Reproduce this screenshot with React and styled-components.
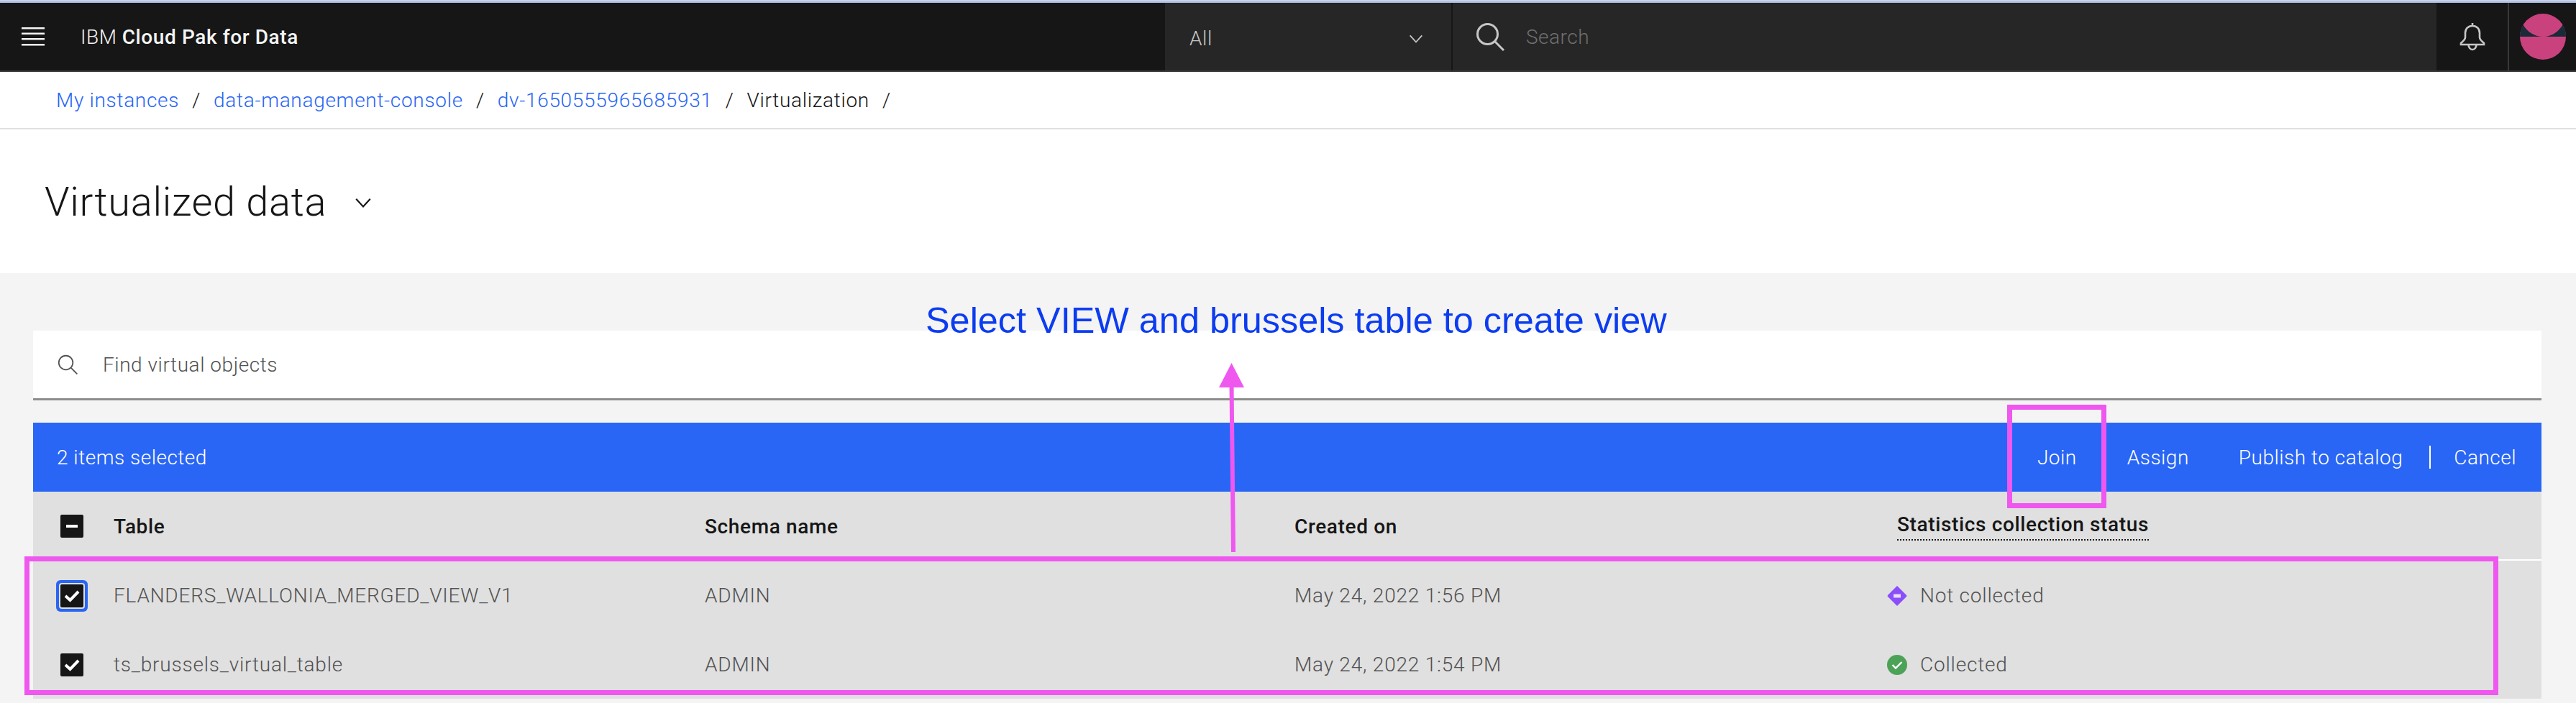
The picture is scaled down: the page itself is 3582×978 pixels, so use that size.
import React from 'react'
import styled, { createGlobalStyle } from 'styled-components'

const Global = createGlobalStyle`
  html, body { margin: 0; padding: 0; background: #f4f4f4; }
  body { font-family: Roboto, "Open Sans", sans-serif; }
  * { box-sizing: border-box; }
`

const Page = styled.div`
  position: relative;
  width: 3582px;
  height: 978px;
  overflow: hidden;
  background: #f4f4f4;
  display: flex;
  flex-direction: column;
`

const WindowEdge = styled.div`
  height: 4px;
  background: linear-gradient(#c9d3ea 50%, #a9b9dd 50%);
`

const Header = styled.header`
  height: 96px;
  flex-shrink: 0;
  display: flex;
  background: #161616;
  border-bottom: 2px solid #393939;
  color: #f4f4f4;
`

const MenuButton = styled.div`
  width: 112px;
  padding-left: 30px;
  display: flex;
  align-items: center;
`

const Brand = styled.div`
  width: 1508px;
  display: flex;
  align-items: center;
  font-size: 28px;
  letter-spacing: 0.6px;
  font-weight: 300;
  strong { font-weight: 500; margin-left: 7px; }
`

const ScopeSelect = styled.div`
  width: 400px;
  display: flex;
  align-items: center;
  justify-content: space-between;
  padding: 4px 38px 0 34px;
  background: #262626;
  border-right: 2px solid #161616;
  font-size: 28px;
  font-weight: 300;
  letter-spacing: 0.6px;
  color: #c6c6c6;
`

const SearchField = styled.div`
  width: 1368px;
  display: flex;
  align-items: center;
  gap: 30px;
  padding-left: 32px;
  background: #262626;
  font-size: 28px;
  font-weight: 300;
  letter-spacing: 0.5px;
  color: #6f6f6f;
`

const BellButton = styled.div`
  width: 99px;
  display: flex;
  align-items: center;
  justify-content: center;
`

const AvatarButton = styled.div`
  flex: 1;
  display: flex;
  align-items: center;
  justify-content: center;
  border-left: 2px solid #393939;
`

const BreadcrumbBar = styled.nav`
  height: 80px;
  flex-shrink: 0;
  display: flex;
  align-items: center;
  padding: 0 0 0 78px;
  background: #fff;
  border-bottom: 2px solid #e0e0e0;
  font-size: 28px;
  font-weight: 300;
  letter-spacing: 0.7px;
  color: #161616;
`

const Crumb = styled.span`
  color: ${p => (p.$current ? '#161616' : '#2966f5')};
`

const Slash = styled.span`
  margin: 0 18px;
  color: #161616;
`

const TitleBar = styled.div`
  height: 200px;
  flex-shrink: 0;
  display: flex;
  align-items: center;
  gap: 38px;
  padding: 2px 0 0 62px;
  background: #fff;
`

const Title = styled.h1`
  margin: 0;
  font-size: 56px;
  font-weight: 300;
  letter-spacing: 0.7px;
  color: #161616;
`

const Content = styled.main`
  flex: 1;
  padding: 80px 48px 0 46px;
`

const FindBox = styled.div`
  height: 97px;
  display: flex;
  align-items: center;
  gap: 35px;
  padding-left: 34px;
  background: #fff;
  border-bottom: 3px solid #8d8d8d;
  font-size: 28px;
  font-weight: 300;
  letter-spacing: 0.55px;
  color: #525252;
`

const BatchBar = styled.div`
  height: 96px;
  margin-top: 31px;
  display: flex;
  align-items: center;
  justify-content: space-between;
  padding: 0 35px 0 33px;
  background: #2966f5;
  color: #fff;
  font-size: 28px;
  font-weight: 300;
  letter-spacing: 0.5px;
`

const BatchActions = styled.div`
  display: flex;
  align-items: center;
`

const BatchAction = styled.span`
  margin-left: ${p => p.$gap}px;
`

const BatchDivider = styled.span`
  width: 2px;
  height: 32px;
  margin: 0 32px 0 37px;
  background: #fff;
`

const Row = styled.div`
  display: grid;
  grid-template-columns: 112px 822px 820px 823px 1fr;
  align-items: center;
  height: 96px;
  padding-top: 1px;
  background: #e0e0e0;
  font-size: 28px;
  font-weight: 300;
  letter-spacing: 0.8px;
  color: #525252;
`

const HeadRow = styled(Row)`
  border-bottom: 2px solid #fff;
  padding-top: 2px;
  font-weight: 500;
  color: #161616;
  letter-spacing: 0.64px;
`

const CheckCell = styled.div`
  padding-left: 38px;
  display: flex;
`

const CheckBox = styled.span`
  width: 32px;
  height: 32px;
  display: flex;
  align-items: center;
  justify-content: center;
  background: #161616;
  border-radius: 2px;
  box-shadow: ${p => (p.$focused ? '0 0 0 2px #e0e0e0, 0 0 0 6px #2966f5' : 'none')};
`

const StatusCell = styled.div`
  display: flex;
  align-items: center;
  gap: 17px;
`

const StatusHead = styled.span`
  margin-left: 15px;
  padding-bottom: 4px;
  border-bottom: 2px dotted #161616;
`

const Overlay = styled.div`
  position: absolute;
  inset: 0;
  pointer-events: none;
`

const Callout = styled.div`
  position: absolute;
  left: ${p => p.$x}px;
  top: ${p => p.$y}px;
  width: ${p => p.$w}px;
  height: ${p => p.$h}px;
  border: ${p => p.$t}px solid #ef57ef;
`

const Note = styled.div`
  position: absolute;
  left: 1287px;
  top: 417px;
  font-family: "Liberation Sans", Arial, sans-serif;
  font-size: 50.4px;
  line-height: 58px;
  white-space: nowrap;
  color: #0c3cf0;
`

const ArrowSvg = styled.svg`
  position: absolute;
  left: 1690px;
  top: 500px;
`

const Chevron = ({ size = 24, color = '#161616' }) => (
  <svg width={size} height={size} viewBox="0 0 24 24" fill="none" stroke={color} strokeWidth="2">
    <path d="M3 8l9 10 9-10" />
  </svg>
)

const Hamburger = () => (
  <svg width="32" height="26" viewBox="0 0 32 26" fill="#f4f4f4">
    <rect y="0" width="32" height="2.5" />
    <rect y="7.5" width="32" height="2.5" />
    <rect y="15" width="32" height="2.5" />
    <rect y="23" width="32" height="2.5" />
  </svg>
)

const SearchIcon = ({ size, color, width }) => (
  <svg width={size} height={size} viewBox="0 0 40 40" fill="none" stroke={color} strokeWidth={width}>
    <circle cx="16.5" cy="16.5" r="14" />
    <path d="M27 27l12 12" />
  </svg>
)

const Bell = () => (
  <svg width="36" height="40" viewBox="0 0 36 40" fill="none" stroke="#c6c6c6" strokeWidth="2.6">
    <path d="M18 1v4M18 5c-6.500 0-10 4.500-10 10v6c0 3-3 5.500-6 8v2h32v-2c-3-2.500-6-5-6-8v-6c0-5.500-3.500-10-10-10z" />
    <path d="M12.500 31c0 4 2.500 7 5.500 7s5.500-3 5.500-7" />
  </svg>
)

const Avatar = () => (
  <svg width="64" height="64" viewBox="0 0 64 64">
    <circle cx="32" cy="32" r="32" fill="#c9427d" />
    <path d="M4.500 15.500C10 25 20 32 32 32c12 0 22-7 27.500-16.500C62.500 20 64 26 64 32H0c0-6 1.500-12 4.500-16.500z" fill="#1b2a38" />
  </svg>
)

const Tick = () => (
  <svg width="22" height="18" viewBox="0 0 22 18" fill="none" stroke="#fff" strokeWidth="4">
    <path d="M2 9l6.500 6L20 3" />
  </svg>
)

const Dash = () => (
  <svg width="16" height="4" viewBox="0 0 16 4">
    <rect width="16" height="4" fill="#fff" />
  </svg>
)

const NotCollected = () => (
  <svg width="30" height="30" viewBox="0 0 30 30">
    <path d="M15 1l13 13a1.500 1.500 0 0 1 0 2L15 29 2 16a1.500 1.500 0 0 1 0-2z" fill="#8a4ffa" />
    <rect x="10" y="12.500" width="10" height="5" fill="#e8dcff" />
  </svg>
)

const Collected = () => (
  <svg width="30" height="30" viewBox="0 0 30 30">
    <circle cx="15" cy="15" r="14" fill="#4ca257" />
    <path d="M8.500 15l4.500 4.500 8.500-8.500" fill="none" stroke="#fff" strokeWidth="2.400" />
  </svg>
)

const rows = [
  { name: 'FLANDERS_WALLONIA_MERGED_VIEW_V1', time: 'May 24, 2022 1:56 PM', status: 'Not collected', focused: true },
  { name: 'ts_brussels_virtual_table', time: 'May 24, 2022 1:54 PM', status: 'Collected', focused: false },
]

const App = () => (
  <Page>
    <Global />
    <WindowEdge />
    <Header>
      <MenuButton><Hamburger /></MenuButton>
      <Brand>IBM <strong>Cloud Pak for Data</strong></Brand>
      <ScopeSelect>All <Chevron size={22} color="#c6c6c6" /></ScopeSelect>
      <SearchField>
        <SearchIcon size={40} color="#c6c6c6" width={3} />
        Search
      </SearchField>
      <BellButton><Bell /></BellButton>
      <AvatarButton><Avatar /></AvatarButton>
    </Header>

    <BreadcrumbBar>
      <Crumb>My instances</Crumb><Slash>/</Slash>
      <Crumb>data-management-console</Crumb><Slash>/</Slash>
      <Crumb>dv-1650555965685931</Crumb><Slash>/</Slash>
      <Crumb $current>Virtualization</Crumb><Slash>/</Slash>
    </BreadcrumbBar>

    <TitleBar>
      <Title>Virtualized data</Title>
      <Chevron size={26} />
    </TitleBar>

    <Content>
      <FindBox>
        <SearchIcon size={28} color="#525252" width={2.6} />
        Find virtual objects
      </FindBox>
      <BatchBar>
        <span>2 items selected</span>
        <BatchActions>
          <BatchAction>Join</BatchAction>
          <BatchAction $gap={70}>Assign</BatchAction>
          <BatchAction $gap={69}>Publish to catalog</BatchAction>
          <BatchDivider />
          <BatchAction>Cancel</BatchAction>
        </BatchActions>
      </BatchBar>
      <HeadRow>
        <CheckCell><CheckBox><Dash /></CheckBox></CheckCell>
        <span>Table</span>
        <span>Schema name</span>
        <span>Created on</span>
        <StatusCell><StatusHead>Statistics collection status</StatusHead></StatusCell>
      </HeadRow>
      {rows.map(row => (
        <Row key={row.name}>
          <CheckCell><CheckBox $focused={row.focused}><Tick /></CheckBox></CheckCell>
          <span>{row.name}</span>
          <span>ADMIN</span>
          <span>{row.time}</span>
          <StatusCell>
            {row.status === 'Collected' ? <Collected /> : <NotCollected />}
            {row.status}
          </StatusCell>
        </Row>
      ))}
    </Content>

    <Overlay>
      <Note>Select VIEW and brussels table to create view</Note>
      <ArrowSvg width="50" height="280" viewBox="0 0 50 280">
        <path d="M22.500 5L40 39H5z" fill="#ef57ef" />
        <path d="M22.500 36L25 268" stroke="#ef57ef" strokeWidth="6" />
      </ArrowSvg>
      <Callout $x={2791} $y={563} $w={138} $h={144} $t={7} />
      <Callout $x={34} $y={774} $w={3440} $h={193} $t={7} />
    </Overlay>
  </Page>
)

export default App
